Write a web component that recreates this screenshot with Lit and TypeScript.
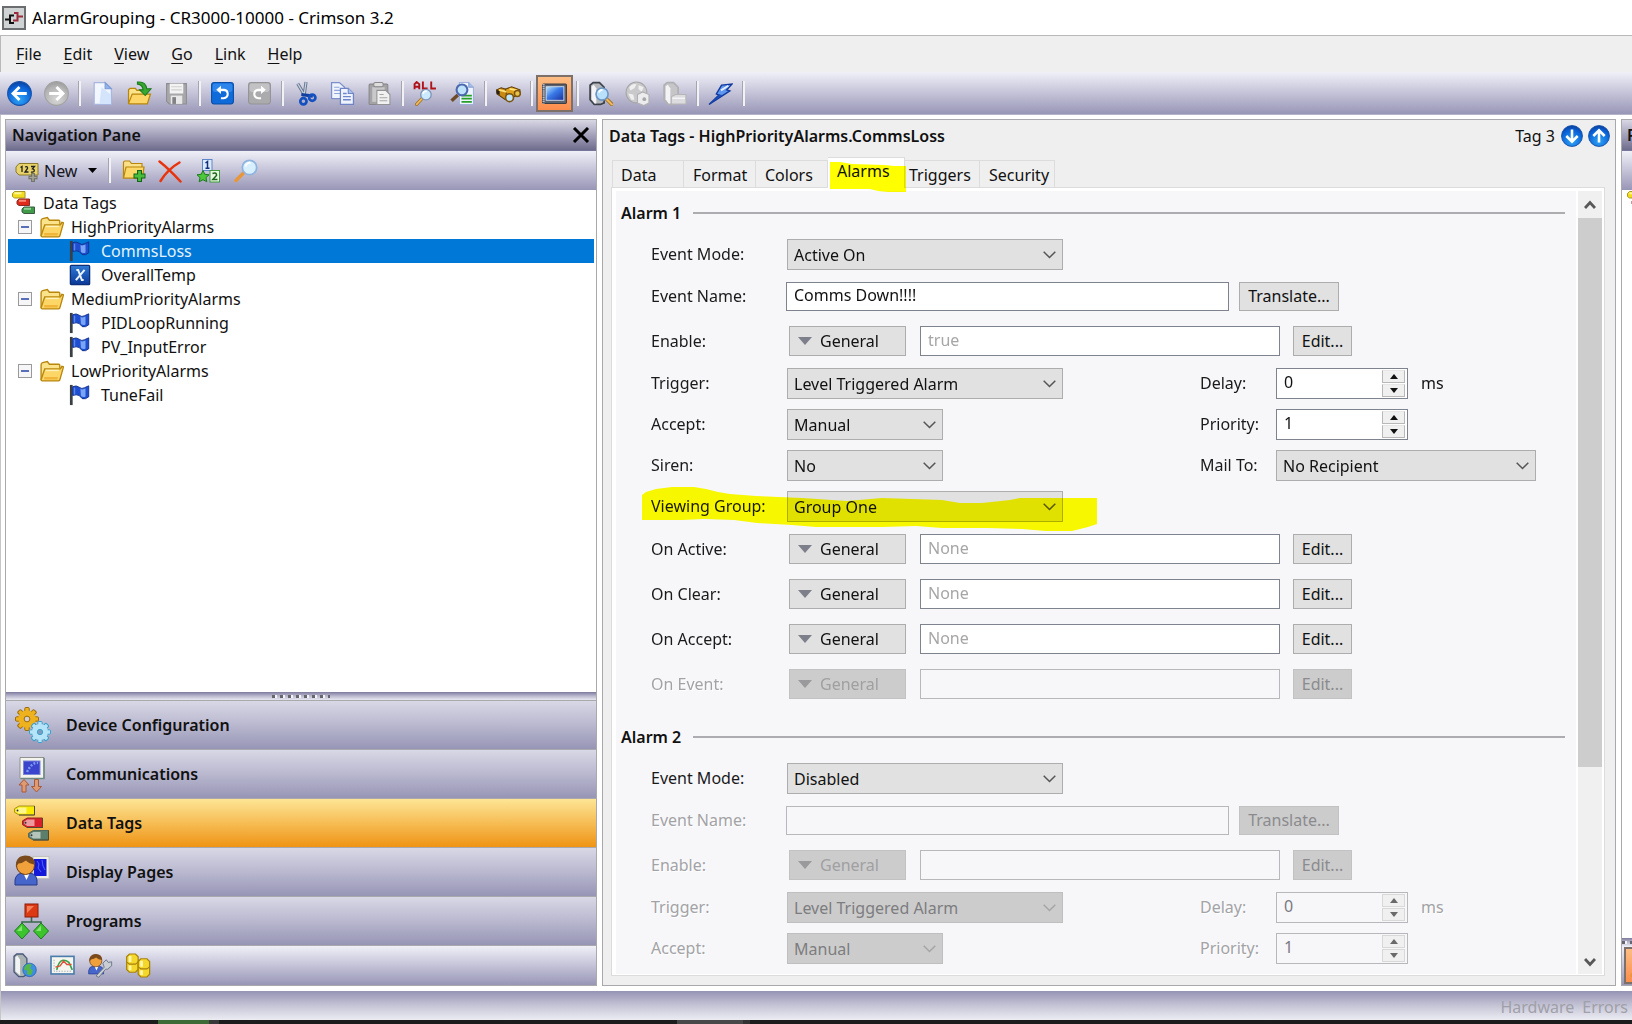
import { LitElement, html, svg, css, nothing, TemplateResult } from "lit";
import { customElement, state } from "lit/decorators.js";
import { classMap } from "lit/directives/class-map.js";

/* ---------- icon drawings ---------- */

const icon = (size: number, body: TemplateResult, box = 24) => html`
  <svg class="icon" width=${size} height=${size} viewBox="0 0 ${box} ${box}" aria-hidden="true">${body}</svg>`;

const arrowDisc = (turn: number, on = true) => svg`
  <defs>
    <radialGradient id=${on ? "discOn" : "discOff"} cx="0.5" cy="0.75" r="0.75">
      <stop offset="0" stop-color=${on ? "#2fa4f5" : "#d6d6d6"}></stop>
      <stop offset="0.7" stop-color=${on ? "#0a62d8" : "#b4b4b4"}></stop>
      <stop offset="1" stop-color=${on ? "#0a3f9c" : "#9a9a9a"}></stop>
    </radialGradient>
  </defs>
  <circle cx="12" cy="12" r="11.4" fill=${on ? "url(#discOn)" : "url(#discOff)"} stroke=${on ? "#1652a8" : "#a2a2a2"} stroke-width="1"></circle>
  <path transform="rotate(${turn} 12 12)" d="M19 12H6.500M12 5.800L5.800 12L12 18.200" fill="none" stroke="#fff" stroke-width="2.800"></path>`;

const magnifier = (x: number, y: number, s: number) => svg`
  <g transform="translate(${x} ${y}) scale(${s})">
    <path d="M9.500 13.500L2 21.500" stroke="#9a6a1c" stroke-width="4.200" stroke-linecap="round"></path>
    <path d="M9.500 13.500L2 21.500" stroke="#f2b95a" stroke-width="2.400" stroke-linecap="round"></path>
    <circle cx="14.500" cy="8.500" r="7" fill="#cdeafc" stroke="#7f95b8" stroke-width="1.800"></circle>
    <path d="M10.500 7.500a4.500 4.500 0 0 1 5-3.600" fill="none" stroke="#fff" stroke-width="2"></path>
  </g>`;

const plcBox = (fill: string, line: string) => svg`
  <path d="M2 4L5 1.500H11L15.500 6V21L12 22.500H6L2 18Z" fill=${fill} stroke=${line} stroke-width="1.600"></path>
  <path d="M3.500 5L5.500 3.500L8 7V21.500H6.500L3.500 17.500Z" fill="#f4f4f6"></path>`;

const tagShape = (x: number, y: number, w: number, h: number, color: string, edge: string) => svg`
  <path transform="translate(${x} ${y})" d="M${h / 2} 0H${w}V${h}H${h / 2}L0 ${h * 0.7}V${h * 0.3}Z" fill=${color} stroke=${edge} stroke-width="1"></path>
  <path transform="translate(${x} ${y})" d="M${h / 2} 1.500H${w * 0.6}V${h - 1.5}H${h / 2}L1.500 ${h * 0.6}V${h * 0.4}Z" fill="#fff" opacity="0.55"></path>
  <path transform="translate(${x} ${y})" d="M${h / 2} ${h}H${w}V0" fill="none" stroke="#4e4a34" stroke-width="1"></path>
  <circle cx=${x + 3} cy=${y + h / 2} r="1" fill="#333"></circle>`;

/* the small tree icon: solid tags without the punched eyelet */
const miniTag = (x: number, y: number, light: string, color: string, edge: string) => svg`
  <path d="M${x + 2} ${y}H${x + 12.5}V${y + 6.5}H${x + 2}L${x} ${y + 5}V${y + 2}Z" fill=${color} stroke=${edge}></path>
  <path d="M${x + 2} ${y + 1.8}H${x + 9}" stroke=${light} stroke-width="2"></path>`;

const gearShape = (cx: number, cy: number, r: number, fill: string, edge: string, hub: string) => svg`
  <g transform="translate(${cx} ${cy})">
    ${[0, 45, 90, 135].map(a => svg`<rect transform="rotate(${a})" x="-2.200" y=${-r} width="4.400" height=${r * 2} rx="1" fill=${fill} stroke=${edge}></rect>`)}
    <circle r=${r * 0.76} fill=${fill}></circle>
    <circle r=${r * 0.25} fill=${hub} stroke=${edge}></circle>
  </g>`;

const personShape = svg`
  <path d="M1 31V26Q2 20 7 19.500H17Q22 20 23 26V31Z" fill="#4666cc" stroke="#26398a"></path>
  <path d="M9.500 19.500L12.500 26L15.500 19.500Z" fill="#fff"></path>
  <circle cx="11.500" cy="11.500" r="9" fill="#f0a13c" stroke="#6b3d10"></circle>
  <path d="M2 13Q1 2.500 11 1.500Q21 1.500 21 10.500Q15 10 12 6.500Q9 9 4.500 9.500Z" fill="#7a4a1c"></path>`;

const folderShape = svg`
  <path d="M2 20V5.500Q2 4 3.500 3.500L8 2.500L10 5H19Q20 5 20 6.500V9" fill="#fbe38c" stroke="#b8860b" stroke-width="1.300"></path>
  <path d="M2 20L5.500 9.500H20.500L22 7L23.500 7.500L20 20Q19.500 21 18.500 21H3Q2 21 2 20Z" fill="#fcd667" stroke="#b8860b" stroke-width="1.300"></path>
  <path d="M5 18.500H18" stroke="#f0b53a" stroke-width="2.400"></path>
  <path d="M6.500 11H19" stroke="#fff2b8" stroke-width="1.400"></path>`;

const ICONS: Record<string, TemplateResult> = {
  back: arrowDisc(0),
  forward: arrowDisc(180, false),
  down: arrowDisc(-90),
  up: arrowDisc(90),
  newFile: svg`
    <path d="M4 1.500H14.500L20.500 7.500V22.500H4Z" fill="#f2f7ff" stroke="#a9b7df" stroke-width="1.200"></path>
    <path d="M11 6L20 13V22H9Z" fill="#d4e4fb"></path>
    <path d="M14.500 1.500L20.500 7.500H14.500Z" fill="#8fb4ee" stroke="#7d9ad2"></path>`,
  open: svg`
    <path d="M1.500 21V8.500L3 7H8L9.500 9H18V12" fill="#fbe38c" stroke="#b8860b" stroke-width="1.200"></path>
    <path d="M1.500 21.500L5 12.500H22.500L19.500 22H2Z" fill="#fdd667" stroke="#b8860b" stroke-width="1.200"></path>
    <path d="M10 1Q18 0 19 7.500H23L17.500 14L12 8.500H15.500Q15 3.500 10 3Z" fill="#39a832" stroke="#1e7a1e" stroke-width="1"></path>`,
  save: svg`
    <path d="M2.500 2.500H21.500V22H5L2.500 19.500Z" fill="#a7a7aa" stroke="#8d8d90"></path>
    <rect x="5.500" y="2.500" width="13" height="9.500" fill="#f3f3f3"></rect>
    <path d="M7 5.500H17M7 8.500H17" stroke="#cfcfcf"></path>
    <rect x="6.500" y="14" width="11" height="8" fill="#e8e8e8"></rect>
    <rect x="8" y="15.500" width="3.500" height="6.500" fill="#828284"></rect>`,
  undo: svg`
    <rect x="1.500" y="1.500" width="21" height="20.500" rx="2.500" fill="#0f6ada" stroke="#0b4ea6"></rect>
    <rect x="2.500" y="2.500" width="19" height="8" rx="2" fill="#3b93f2" opacity="0.7"></rect>
    <path d="M8 8.500H13.500Q17 9 17 12.500Q17 16 13 16.500H10.500" fill="none" stroke="#fff" stroke-width="2"></path>
    <path d="M10.500 4.500V12.500L6 8.500Z" fill="#fff"></path>`,
  redo: svg`
    <rect x="1.500" y="1.500" width="21" height="20.500" rx="2.500" fill="#ababad" stroke="#949496"></rect>
    <rect x="2.500" y="2.500" width="19" height="8" rx="2" fill="#c2c2c4"></rect>
    <path d="M16 8.500H10.500Q7 9 7 12.500Q7 16 11 16.500H13.500" fill="none" stroke="#fff" stroke-width="2"></path>
    <path d="M13.500 4.500V12.500L18 8.500Z" fill="#fff"></path>`,
  cut: svg`
    <path d="M4.500 2.500L12 15M12.500 1L10.500 15" stroke="#66768f" stroke-width="3"></path>
    <path d="M4.500 2.500L12 15M12.500 1L10.500 15" stroke="#c5d0e0" stroke-width="1.200"></path>
    <path d="M8 13L19 14.500" stroke="#123f9e" stroke-width="3"></path>
    <circle cx="10" cy="19.500" r="3" fill="none" stroke="#1550c0" stroke-width="2.600"></circle>
    <circle cx="18.500" cy="16" r="3" fill="none" stroke="#1550c0" stroke-width="2.600"></circle>`,
  copy: svg`
    <path d="M1.500 1.500H9L14 6V17H1.500Z" fill="#eef3fd" stroke="#7b8fca" stroke-width="1.200"></path>
    <path d="M4 6H9M4 9H10M4 12H10" stroke="#8fa4dc"></path>
    <path d="M10 7H17.500L22.500 12V22.500H10Z" fill="#eef3fd" stroke="#6f84c4" stroke-width="1.200"></path>
    <path d="M17.500 7V12H22.500" fill="#a9c1ef" stroke="#6f84c4"></path>
    <path d="M12.500 12H16M12.500 15H20M12.500 18H20" stroke="#6f86cc" stroke-width="1.300"></path>`,
  paste: svg`
    <rect x="2" y="3" width="18" height="19.500" rx="1" fill="#a3a3a5" stroke="#88888a"></rect>
    <rect x="5" y="6" width="12" height="14" fill="#c9c9cb"></rect>
    <rect x="6.500" y="1.500" width="9" height="4" rx="1.500" fill="#dedede" stroke="#88888a"></rect>
    <path d="M9.500 9H18L22 13V22.500H9.500Z" fill="#f1f1f1" stroke="#929294"></path>
    <path d="M12 13H16M12 16H19.500M12 19H19.500" stroke="#a6a6a8"></path>`,
  findAll: svg`
    <g fill="none" stroke="#b01218" stroke-width="1.800">
      <path d="M1.500 8V3L3.500 1L6 3V8M1.500 5.500H6"></path><path d="M9.500 0.500V7.200H14"></path><path d="M17.500 0.500V7.200H22"></path>
    </g>${magnifier(2, 7, 0.72)}`,
  findDoc: svg`
    <path d="M9 1.500H18L22.500 6V22.500H9Z" fill="#eef5ff" stroke="#9fb1da"></path>
    <path d="M18 1.500V6H22.500" fill="#9dbbe8" stroke="#8aa2d2"></path>
    <path d="M11 14H21M11 17H21M11 20H21" stroke="#28a028" stroke-width="1.700"></path>
    <path d="M7.500 13.500L1.500 19" stroke="#6d4b28" stroke-width="3.400"></path>
    <circle cx="11.500" cy="8.500" r="5.200" fill="#bfe2fb" stroke="#4c68ae" stroke-width="2"></circle>`,
  binoculars: svg`
    <path d="M0.500 8.500L5 6.500L13 9L12 17L9 18L1 12.500Z" fill="#c88a12" stroke="#5f3d08"></path>
    <path d="M9 8L15 5.500L23 8.500V13L17 15L10 13Z" fill="#e0a21c" stroke="#5f3d08"></path>
    <path d="M3 8.500L10 10.500M13 7.500L20 9" stroke="#ffe27a" stroke-width="1.800"></path>
    <path d="M0.500 8.500V12L3.500 13.500V9.500Z" fill="#26211a"></path>
    <circle cx="13" cy="16" r="3.800" fill="#bfe6fb" stroke="#7a5410" stroke-width="1.600"></circle>
    <circle cx="20.500" cy="12" r="2.800" fill="#e9c24a" stroke="#7a5410" stroke-width="1.400"></circle>`,
  monitor: svg`
    <defs><linearGradient id="crt" x1="0" y1="0" x2="1" y2="1">
      <stop offset="0" stop-color="#b8e6ff"></stop><stop offset="0.45" stop-color="#3a7be8"></stop><stop offset="1" stop-color="#1a2f9c"></stop>
    </linearGradient></defs>
    <rect x="0.500" y="3" width="23" height="18.500" rx="1" fill="#5c6370" stroke="#3b3f48"></rect>
    <path d="M1.500 3V21.500" stroke="#d9dde6" stroke-width="2" stroke-dasharray="1 1"></path>
    <rect x="4" y="5.500" width="17" height="13" fill="url(#crt)" stroke="#dfe6f2" stroke-width="0.800"></rect>`,
  findPlc: svg`
    ${plcBox("#b4b8bc", "#3c4048")}
    <path d="M17.500 17L23 22.500" stroke="#9a6a1c" stroke-width="3.600" stroke-linecap="round"></path>
    <path d="M17.500 17L23 22.500" stroke="#f2b95a" stroke-width="2" stroke-linecap="round"></path>
    <circle cx="13.500" cy="12.500" r="5.800" fill="#b9e0fa" stroke="#6d95c4" stroke-width="1.600"></circle>
    <path d="M10.500 11a3.500 3.500 0 0 1 3.500-2.500" fill="none" stroke="#fff" stroke-width="1.600"></path>`,
  globeOff: svg`
    <circle cx="11" cy="11" r="10" fill="#c9c9cb" stroke="#a6a6a8"></circle>
    <path d="M4 6Q7 2 11 3L9 7L5 9ZM13 4L18 6L16 10L13 8ZM3 12L8 13L9 18L6 18Z" fill="#efefef"></path>
    <path d="M12 13L17 10.500L23 13V21L18 23.500L12 21Z" fill="#ececee" stroke="#b0b0b2"></path>
    <circle cx="18.500" cy="17.500" r="1.800" fill="#a6a6a8"></circle>`,
  plcOff: svg`
    ${plcBox("#c6c6c8", "#b0b0b2")}
    <path d="M9 15L13 13H23V22H9Z" fill="#dcdcde" stroke="#b6b6b8"></path>
    <path d="M10 16.500H22" stroke="#fff"></path>`,
  bolt: svg`
    <path d="M13 4L23 3L18 8.500L21 9.500L1 22.500L10.500 13.500L8 12.500Z" fill="#5f96f0" stroke="#10389c" stroke-width="1.300"></path>
    <path d="M12.500 9L19.500 4.500" stroke="#e3efff" stroke-width="1.800"></path>
    <path d="M1 22.500L11 13L14 13.500Z" fill="#1a4cb8"></path>`,
  newTag: svg`
    <path d="M4 4.500H23V16H4L1 13V8Z" fill="#e8d36a" stroke="#8a7a2a"></path>
    <path d="M5.500 8.500L7 7.500V13M10 8Q13 7 12.500 9.500L10 13H13.500M16 7.500H19.500L17.500 9.800Q20 10.500 19 12.500Q17.500 13.500 16 12.800" fill="none" stroke="#222" stroke-width="1.300"></path>
    <path d="M18 14V23M13.500 18.500H22.500" stroke="#6a6a5c" stroke-width="3.600"></path>
    <path d="M18 14.800V22.200M14.300 18.500H21.700" stroke="#a5a598" stroke-width="1.600"></path>`,
  newFolder: svg`
    <path d="M1.500 19V3.500Q1.500 2 3 2H7.500L9.500 4.500H20V19Z" fill="#fbe08a" stroke="#b8860b" stroke-width="1.200"></path>
    <path d="M1.500 19L4 8H22L20.500 19Z" fill="#fcd868" stroke="#b8860b" stroke-width="1.200"></path>
    <path d="M17.500 11V23M11.500 17H23.500" stroke="#14661a" stroke-width="5"></path>
    <path d="M17.500 12V22M12.500 17H22.500" stroke="#4bbd3c" stroke-width="2.800"></path>`,
  remove: svg`<path d="M1.500 2.500Q11 10 22.500 22.500M21.500 3.500Q10 10 2.500 22" fill="none" stroke="#e8330c" stroke-width="2.400" stroke-linecap="round"></path>`,
  sort: svg`
    <rect x="6.500" y="0.500" width="9.500" height="11" fill="#dce9fb" stroke="#5f86c8"></rect>
    <path d="M9.500 4L11.500 2.500V9M9.500 9.200H13.500" fill="none" stroke="#12307c" stroke-width="1.500"></path>
    <rect x="14" y="11.500" width="9.500" height="11.500" fill="#e8f7e0" stroke="#3c9a3c"></rect>
    <path d="M16.500 14.500Q21 13 20.500 16.500L16.800 20.500H21.500" fill="none" stroke="#1b6420" stroke-width="1.500"></path>
    <path d="M7 11.500L8.800 15.300L13 15.800L10 18.600L10.800 22.800L7 20.700L3.200 22.800L4 18.600L1 15.800L5.200 15.300Z" fill="#4cc83a" stroke="#1f7a1f"></path>`,
  search: svg`
    <path d="M10 13.500L2 21.500" stroke="#e8963c" stroke-width="3.600" stroke-linecap="round"></path>
    <circle cx="15.500" cy="8.500" r="7.200" fill="#d8f0fe" stroke="#8fb4e0" stroke-width="1.800"></circle>
    <path d="M11.500 7.500a4.500 4.500 0 0 1 5-3.600" fill="none" stroke="#fff" stroke-width="2"></path>`,
  tags: svg`
    ${miniTag(0.5, 0.5, "#fff89a", "#f2dc1c", "#a8942a")}
    ${miniTag(5, 8, "#f88a78", "#e02a1a", "#8c2c24")}
    ${miniTag(10, 16, "#8ed096", "#3f9a4a", "#3b5a40")}`,
  folder: folderShape,
  flag: svg`
    <path d="M2.500 1V23" stroke="#3a3f44" stroke-width="3"></path>
    <path d="M4 3Q8 1 11 3.500Q14 6 17 4L21.500 2V14Q18 17 14.500 16L11 12.500Q8 11 4 12.500Z" fill="#1f4fd0" stroke="#12308c" stroke-width="1"></path>
    <path d="M12.500 5.500Q15 6.500 18 5V13.500Q15.500 15 13 13Z" fill="#7aa5f6"></path>
    <path d="M6 4V11.500" stroke="#5a86ee" stroke-width="1.600"></path>`,
  formula: svg`
    <defs><linearGradient id="fx" x1="0" y1="0" x2="0" y2="1"><stop offset="0" stop-color="#2e7ad6"></stop><stop offset="1" stop-color="#0a3796"></stop></linearGradient></defs>
    <rect x="1.500" y="1.500" width="21" height="21" rx="1" fill="url(#fx)" stroke="#0b2f78" stroke-width="1.400"></rect>
    <path d="M8 6.500L10 6.500L14 17.500H16M17 6.500L7.500 17.500" fill="none" stroke="#e8f3ff" stroke-width="2.200"></path>`,
};

const NAV_ICONS: Record<string, TemplateResult> = {
  devices: svg`
    ${gearShape(13, 12, 11.5, "#eeb21e", "#9a6a0a", "#d5cfd8")}
    ${gearShape(26, 25, 10.5, "#b5e4f8", "#3aa0cc", "#7f9cc0")}`,
  comms: svg`
    <path d="M6 1.500H30V22.500H6Z" fill="#f4f3ee" stroke="#8f938f"></path>
    <path d="M30 2V22.500H7" fill="none" stroke="#6f8a84" stroke-width="1.600"></path>
    <rect x="9.500" y="5" width="16.500" height="13.500" fill="#3a44cc" stroke="#7a86d8"></rect>
    <path d="M13 16Q18 6 24 7" fill="none" stroke="#7c9af0" stroke-width="2.400" stroke-dasharray="2 1.500"></path>
    <path d="M10 23.500L15 29H12V36H8V29H5ZM22.500 36L27.500 30.500H24.500V23.500H20.500V30.500H17.500Z" fill="#e09a72" stroke="#a65a3a"></path>`,
  tags: svg`
    ${tagShape(0.5, 1, 20, 9, "#f8ea00", "#a8942a")}
    ${tagShape(8.5, 13, 20, 9.500, "#d8202c", "#8c2c24")}
    ${tagShape(14.5, 25.5, 20, 9.500, "#5b7f6a", "#55665c")}`,
  pages: svg`
    <rect x="19" y="2.500" width="16" height="22" fill="#efefea" stroke="#c2c2c0"></rect>
    <rect x="20" y="5" width="12.500" height="17" fill="#1418d8"></rect>
    <path d="M23 7L25 10L24 14L27 18M28 6L29 12L31 16" stroke="#4c66ff" fill="none"></path>
    ${personShape}`,
  programs: svg`
    <path d="M17.500 14V19M8 25V19H27V25" fill="none" stroke="#3a6a4a" stroke-width="1.600"></path>
    <rect x="11" y="1" width="13" height="13" fill="#dc3a12" stroke="#8c1c0c"></rect>
    <path d="M13 3H20L13 10Z" fill="#f2805a"></path>
    <path d="M8 20L15.500 28L8 36L0.500 28ZM27 20L34.500 28L27 36L19.500 28Z" fill="#3cc42c" stroke="#1c7a1c"></path>
    <path d="M8 22.500L3 28H8ZM27 22.500L22 28H27Z" fill="#86e272"></path>`,
  web: svg`
    <path d="M3 5L7 1.500H16L22 8V32L17 35H10L3 28Z" fill="#aab2b4" stroke="#4a5a78" stroke-width="2"></path>
    <path d="M5 6L8 4L12 10V33L5 27Z" fill="#f2f4f4"></path>
    <circle cx="26" cy="25" r="10" fill="#3f8ee0" stroke="#1c5aa8"></circle>
    <path d="M19 20Q23 15 29 17L27 23L31 26L28 33L22 31L23 26L18 25Z" fill="#54b848"></path>`,
  trend: svg`
    <rect x="1.500" y="5" width="34" height="26" fill="#f5f6f0" stroke="#4a7cac" stroke-width="2.400"></rect>
    <path d="M6 10V27H32" fill="none" stroke="#7a8a9c" stroke-dasharray="2 2"></path>
    <path d="M10 25Q13 12 18 11T28 14L33 25" fill="none" stroke="#38a04a" stroke-width="2.400"></path>
    <path d="M8 21L15 19L20 12L25 17L32 17" fill="none" stroke="#e05038" stroke-width="2"></path>`,
  security: svg`
    ${personShape}
    <path d="M12 34L24 21L22 15L27 10L30 14L35 13L35 19L29 24L26 24L16 36Z" fill="#c9ced4" stroke="#6c7684" stroke-width="1.400"></path>`,
  database: svg`
    ${[[1, 1.5], [18, 8.5]].map(([x, y]) => svg`<g transform="translate(${x} ${y})">
      <path d="M0 4L4 0H13L17 4V23L13 27H4L0 23Z" fill="#f4d82c" stroke="#a8800c" stroke-width="1.800"></path>
      <path d="M0 12L4 15H13L17 12" fill="none" stroke="#a8800c" stroke-width="1.600"></path>
      <path d="M5 3V12M5 17V24" stroke="#fff6ae" stroke-width="4"></path></g>`)}`,
};

const chevron = html`<svg class="chevron" width="13" height="8" viewBox="0 0 13 8" aria-hidden="true"><path d="M0.700 0.800L6.500 6.500L12.300 0.800" fill="none" stroke="currentColor" stroke-width="1.500"></path></svg>`;
const triangle = html`<svg width="14" height="8" viewBox="0 0 14 8" aria-hidden="true"><path d="M0 0H14L7 8Z" fill="currentColor"></path></svg>`;

/* ---------- data ---------- */

const TOOL_GROUPS: [string, string][][] = [
  [["back", "Back"], ["forward", "Forward"]],
  [["newFile", "New"], ["open", "Open"], ["save", "Save"]],
  [["undo", "Undo"], ["redo", "Redo"]],
  [["cut", "Cut"], ["copy", "Copy"], ["paste", "Paste"]],
  [["findAll", "Find all"], ["findDoc", "Find in item"]],
  [["binoculars", "Find"]],
  [["monitor", "Preview"]],
  [["findPlc", "Find device"], ["globeOff", "Browse"], ["plcOff", "Mount"]],
  [["bolt", "Download"]],
];

const TREE = [
  { name: "HighPriorityAlarms", items: [["CommsLoss", "flag"], ["OverallTemp", "formula"]] },
  { name: "MediumPriorityAlarms", items: [["PIDLoopRunning", "flag"], ["PV_InputError", "flag"]] },
  { name: "LowPriorityAlarms", items: [["TuneFail", "flag"]] },
];

const CATEGORIES = [
  ["Device Configuration", "devices"],
  ["Communications", "comms"],
  ["Data Tags", "tags"],
  ["Display Pages", "pages"],
  ["Programs", "programs"],
];

const TABS = ["Data", "Format", "Colors", "Alarms", "Triggers", "Security"];

interface Alarm { id: string; title: string; mode: string; name: string; off: boolean; }
const ALARMS: Alarm[] = [
  { id: "a1", title: "Alarm 1", mode: "Active On", name: "Comms Down!!!!", off: false },
  { id: "a2", title: "Alarm 2", mode: "Disabled", name: "", off: true },
];

@customElement("app-root")
export class AppRoot extends LitElement {
  @state() private selected = "CommsLoss";
  @state() private tab = "Alarms";
  @state() private category = "Data Tags";

  static styles = css`
    :host {
      display: grid;
      grid-template-rows: 35px 37px 43px minmax(0, 1fr) 29px 4px;
      height: 100vh;
      box-sizing: border-box;
      overflow: hidden;
      background: #fff;
      color: #111;
      font: 16px/24px "Noto Sans", "Open Sans", sans-serif;
      --edge: #a9a9ad;
      --bar: linear-gradient(#f0f0f8, #c4c3d8 50%, #9896b6);
      --nav: linear-gradient(#d9d8e6, #b9b8cf 50%, #9795b5);
      --head: linear-gradient(#d8d7e4, #a3a1ba 50%, #6e6c8c);
    }
    *, *::before, *::after { box-sizing: border-box; }
    button, input, select { font: inherit; color: inherit; margin: 0; border-radius: 0; }
    button { padding: 0; border: 0; background: none; }
    h1, h2, ul { margin: 0; padding: 0; font: inherit; list-style: none; }
    .icon, svg { display: block; flex: none; }

    .title { display: flex; align-items: center; gap: 6px; padding-left: 2px; font-size: 17px; color: #000; }
    .menu { display: flex; align-items: center; gap: 22px; padding: 0 15px; background: #efefef; border-top: 1px solid #b9b9b9; border-left: 1px solid #b9b9b9; }
    .menu u { text-underline-offset: 3px; }
    .tools { display: flex; align-items: center; padding-left: 1px; background: var(--bar); border-bottom: 1px solid #b4b3c8; }
    .tool { display: grid; place-items: center; width: 37px; height: 37px; }
    .tool.on { background: linear-gradient(#fdbd84, #fc8d4c); border: 2px solid #7d7068; }
    .sep { width: 9px; display: flex; justify-content: center; }
    .sep::before { content: ""; width: 3px; height: 25px; background: #f2f2f6; border-left: 1px solid #a5a5b0; }

    .work { display: flex; gap: 5px; min-height: 0; padding: 4px 0 5px 4px; border-left: 1px solid #c6c6c6; }
    .panel { display: flex; flex-direction: column; min-height: 0; border: 1px solid var(--edge); background: #fff; }
    .nav { flex: 0 0 592px; }
    .main { flex: 1; min-width: 0; background: #efefef; }
    .side { flex: 0 0 11px; overflow: hidden; border-right: 0; }

    .head { flex: none; display: flex; align-items: center; justify-content: space-between; height: 31px; padding: 0 6px; background: var(--head); border-bottom: 1px solid #77759a; }
    .bold { font-weight: 600; }
    .subbar { flex: none; display: flex; align-items: center; height: 39px; background: var(--bar); padding-left: 6px; }
    .new { display: flex; align-items: center; gap: 5px; width: 89px; padding-left: 3px; color: #16161c; }
    .new svg:last-child { margin-left: 6px; }
    .subbar .sep { margin: 0 2px 0 4px; }
    .subbar .tool { width: 38px; }
    .subbar .tool:first-of-type { width: 37px; }
    .subbar .sep + .tool { width: 35px; }

    .tree { flex: 1; min-height: 0; overflow: hidden; padding: 1px 2px; }
    .node { display: flex; align-items: center; height: 24px; width: 100%; text-align: left; gap: 7px; }
    .node.root { padding-left: 4px; }
    .node.group { padding-left: 10px; }
    .node.leaf { padding-left: 61px; gap: 10px; }
    .node.picked { background: #0078d7; color: #e6f2fc; }
    .box { display: grid; place-items: center; width: 14px; height: 14px; border: 1px solid #9a9a9a; background: #f6f6f8; }
    .box::before { content: ""; width: 8px; height: 2px; background: #5870b8; }
    .grip { flex: none; height: 8px; display: grid; place-items: center; background: linear-gradient(#7c7a9c, #b9b8ce 50%, #e8e8f0); }
    .grip::before { content: ""; width: 58px; height: 3px; background: repeating-linear-gradient(90deg, #66666f 0 3px, #f4f4f8 3px 5px, transparent 5px 8px); }
    .cats { flex: none; border-top: 1px solid var(--edge); }
    .cat { display: flex; align-items: center; gap: 15px; width: 100%; height: 49px; padding-left: 8px; background: var(--nav); border-bottom: 1px solid var(--edge); }
    .cat.on { background: linear-gradient(#fde595, #f6bd55 50%, #ef9414); }
    .strip { flex: none; display: flex; align-items: center; gap: 13px; height: 39px; padding-left: 6px; background: var(--bar); }

    .mainhead { flex: none; display: flex; align-items: center; gap: 5px; height: 37px; padding: 0 5px 6px 6px; }
    .mainhead h1 { flex: 1; }
    .count { margin-right: 1px; }
    .tabs { display: flex; align-items: flex-end; height: 31px; padding-left: 9px; position: relative; }
    .tab { height: 28px; border: 1px solid #dcdcdc; border-bottom: 0; border-left-width: 0; text-align: left; padding-left: 9px; width: 72px; white-space: nowrap; }
    .tab:first-child { border-left-width: 1px; padding-left: 8px; }
    .tab:last-of-type { width: 75px; }
    .tab.on { height: 31px; width: 77px; background: #fff; padding: 0 0 4px 9px; }
    .tab.on + .tab { width: 75px; padding-left: 4px; }
    .mark { position: absolute; mix-blend-mode: multiply; pointer-events: none; }
    .tabs .mark { left: 227px; top: 5px; }
    .page { flex: 1; min-height: 0; display: flex; margin: -1px 10px 9px 8px; border: 1px solid #dcdcdc; background: #fff; padding: 3px 2px 1px 4px; }
    .scroll { flex: 1; min-width: 0; overflow: hidden auto; scrollbar-width: none; background: #f7f7fa; padding-top: 1px; }
    .bar { flex: 0 0 24px; display: flex; flex-direction: column; background: #f0f0f0; margin-left: 2px; }
    .bar button { height: 27px; display: grid; place-items: center; color: #585858; }
    .bar button:last-child { height: 24px; }
    .track { flex: 1; }
    .thumb { height: 75%; background: #cdcdcd; }

    .alarm { padding: 0 11px 10px 5px; }
    .caption { display: flex; align-items: center; gap: 12px; height: 42px; }
    .caption::after { content: ""; flex: 1; height: 2px; background: #adadb1; }
    .rows { padding: 0 0 0 30px; }
    .settings { display: grid; gap: 1px; }
    .row { display: grid; grid-template-columns: 136px 413px 76px minmax(0, 1fr); align-items: center; height: 40px; position: relative; }
    .row.text { height: 44px; grid-template-columns: 135px minmax(0, 1fr); }
    .row.expr { height: 45px; grid-template-columns: 138px minmax(0, 1fr); }
    .row .mark { left: -9px; top: 1px; }
    .fields { display: flex; align-items: center; }
    label { color: #1a1a1a; white-space: nowrap; }
    label.off, .unit.off { color: #a3a3a6; text-shadow: 1px 1px #fff; }
    .combo { position: relative; display: flex; align-items: center; width: 276px; height: 31px; margin-top: 1px; color: #111; }
    .combo.short { width: 156px; }
    .combo.wide { width: 260px; }
    .combo select { width: 100%; height: 100%; padding: 0 24px 0 6px; border: 1px solid #adadad; background: #e1e1e1; appearance: none; opacity: 1; }
    .chevron { position: absolute; right: 7px; color: #555; pointer-events: none; }
    .combo select:disabled { background: #cccccc; border-color: #bfbfbf; color: #7d7d80; }
    .combo select:disabled + .chevron { color: #a5a5a5; }
    .entry { height: 29px; border: 1px solid #7f838e; background: #fff; padding: 0 7px 2px; width: 443px; }
    .row.expr .entry { height: 30px; width: 360px; margin-left: 14px; }
    .entry::placeholder { color: #a6a6a8; opacity: 1; }
    .entry:disabled { background: #f7f7fa; border-color: #b8b8bc; }
    .push { height: 30px; border: 1px solid #adadad; background: #e1e1e1; text-align: center; color: #111; }
    .push:disabled { background: #cccccc; border-color: #c2c2c2; color: #8b8b8e; }
    .translate { width: 100px; height: 29px; margin-left: 10px; }
    .edit { width: 59px; margin-left: 13px; }
    .general { width: 117px; display: flex; align-items: center; gap: 8px; padding-left: 8px; }
    .general svg { color: #7d808a; }
    .general:disabled { color: #a0a0a2; }
    .general:disabled svg { color: #9a9a9c; }
    .spin { display: flex; width: 132px; height: 31px; border: 1px solid #7f838e; background: #fff; padding: 1px 2px 1px 0; }
    .spin input { flex: 1; min-width: 0; border: 0; background: none; padding: 0 0 3px 7px; appearance: textfield; }
    .spin input::-webkit-inner-spin-button { appearance: none; margin: 0; }
    .spin.off { border-color: #b8b8bc; background: #f7f7fa; color: #6e6e72; }
    .spin.off input { color: #7a7a80; }
    .steps { display: flex; flex-direction: column; gap: 1px; width: 23px; }
    .steps button { flex: 1; display: grid; place-items: center; background: #f0f0f0; border: 1px solid #b8b8b8; border-top-color: #e6e6e6; color: #111; }
    .spin.off .steps button { border-color: #d8d8d8; color: #6a6a6a; }
    .unit { margin-left: 13px; }

    .side .head { padding: 0 5px; }
    .side .blank { flex: 1; padding: 1px 0 0 5px; }
    .side .strip { padding: 0 0 0 2px; }
    .side .tool { flex: none; }
    .status { display: flex; align-items: center; justify-content: flex-end; gap: 8px; padding: 2px 4px 0; background: linear-gradient(#9593b3, #c5c4d6 50%, #ececf3); color: #a0a0a8; border-left: 1px solid #c6c6c6; }
    .taskbar { background: linear-gradient(90deg, #1c1c1c 158px, #3c6b38 158px 209px, #383838 209px 219px, #1c1c1c 219px 677px, #484848 677px 743px, #333 743px 750px, #1c1c1c 750px); }
  `;

  private combo(id: string, value: string, cls = "", off = false) {
    return html`<div class="combo ${cls}">
      <select id=${id} ?disabled=${off}><option selected>${value}</option></select>${chevron}
    </div>`;
  }

  private label(id: string, text: string, off = false) {
    return html`<label class=${classMap({ off })} for=${id}>${text}</label>`;
  }

  private expression(id: string, text: string, hint: string, off: boolean) {
    return html`<div class="row expr">
      ${this.label(id, text, off)}
      <div class="fields">
        <button class="push general" ?disabled=${off}>${triangle}General</button>
        <input class="entry" id=${id} placeholder=${off ? "" : hint} ?disabled=${off}>
        <button class="push edit" ?disabled=${off}>Edit...</button>
      </div>
    </div>`;
  }

  private spinner(id: string, value: number, off: boolean, unit = "") {
    const arrow = (d: string) => html`<svg width="8" height="5" viewBox="0 0 8 5"><path d=${d} fill="currentColor"></path></svg>`;
    return html`<div class="fields">
      <div class=${classMap({ spin: true, off })}>
        <input id=${id} type="number" .value=${String(value)} ?disabled=${off}>
        <div class="steps">
          <button aria-label="Increase" ?disabled=${off}>${arrow("M0 5H8L4 0Z")}</button>
          <button aria-label="Decrease" ?disabled=${off}>${arrow("M0 0H8L4 5Z")}</button>
        </div>
      </div>
      ${unit ? html`<span class=${classMap({ unit: true, off })}>${unit}</span>` : nothing}
    </div>`;
  }

  private alarm(a: Alarm) {
    const id = (s: string) => `${a.id}-${s}`;
    const off = a.off;
    return html`<section class="alarm">
      <h2 class="caption bold">${a.title}</h2>
      <div class="rows">
        <div class="row">${this.label(id("mode"), "Event Mode:")}${this.combo(id("mode"), a.mode)}</div>
        <div class="row text">
          ${this.label(id("name"), "Event Name:", off)}
          <div class="fields">
            <input class="entry" id=${id("name")} .value=${a.name} ?disabled=${off}>
            <button class="push translate" ?disabled=${off}>Translate...</button>
          </div>
        </div>
        ${this.expression(id("enable"), "Enable:", "true", off)}
        <div class="settings">
          <div class="row">
            ${this.label(id("trigger"), "Trigger:", off)}${this.combo(id("trigger"), "Level Triggered Alarm", "", off)}
            ${this.label(id("delay"), "Delay:", off)}${this.spinner(id("delay"), 0, off, "ms")}
          </div>
          <div class="row">
            ${this.label(id("accept"), "Accept:", off)}${this.combo(id("accept"), "Manual", "short", off)}
            ${this.label(id("priority"), "Priority:", off)}${this.spinner(id("priority"), 1, off)}
          </div>
          <div class="row">
            ${this.label(id("siren"), "Siren:", off)}${this.combo(id("siren"), "No", "short", off)}
            ${this.label(id("mail"), "Mail To:", off)}${this.combo(id("mail"), "No Recipient", "wide", off)}
          </div>
          <div class="row">
            ${this.label(id("group"), "Viewing Group:", off)}${this.combo(id("group"), "Group One", "", off)}
            ${off ? nothing : html`<svg class="mark" width="455" height="46" viewBox="0 0 455 46" aria-hidden="true">
              <path fill="#ff0" d="M0 8L4 5L14 2L30 0H52L64 2L76 5L88 7L114 9L160 11L205 14L240 11L300 13L318 16H340L368 13L378 11H455V37L446 40L430 44H404L380 42L345 41H300L274 39L240 40H174L150 38L115 36L92 33L62 32L40 33H0Z"></path></svg>`}
          </div>
        </div>
        ${this.expression(id("active"), "On Active:", "None", off)}
        ${this.expression(id("clear"), "On Clear:", "None", off)}
        ${this.expression(id("onaccept"), "On Accept:", "None", off)}
        ${this.expression(id("event"), "On Event:", "", true)}
      </div>
    </section>`;
  }

  private navigation() {
    return html`<aside class="panel nav">
      <div class="head">
        <h2 class="bold">Navigation Pane</h2>
        <button aria-label="Close"><svg width="18" height="16" viewBox="0 0 18 16"><path d="M2 1L16 15M16 1L2 15" stroke="#000" stroke-width="3"></path></svg></button>
      </div>
      <div class="subbar">
        <button class="new">${icon(24, ICONS.newTag)}<span>New</span>
          <svg width="9" height="5" viewBox="0 0 9 5"><path d="M0 0H9L4.500 5Z"></path></svg></button>
        <i class="sep"></i>
        ${[["newFolder", "New folder"], ["remove", "Delete"], ["sort", "Sort"], ["search", "Find"]].map(([k, t]) =>
          html`<button class="tool" aria-label=${t}>${icon(24, ICONS[k])}</button>`)}
      </div>
      <ul class="tree">
        <li><button class="node root">${icon(24, ICONS.tags)}<span>Data Tags</span></button></li>
        ${TREE.map(g => html`
          <li><button class="node group"><i class="box"></i>${icon(25, ICONS.folder)}<span>${g.name}</span></button>
            <ul>${g.items.map(([name, kind]) => html`<li>
              <button class=${classMap({ node: true, leaf: true, picked: this.selected === name })}
                @click=${() => (this.selected = name)}>${icon(22, ICONS[kind])}<span>${name}</span></button></li>`)}
            </ul></li>`)}
      </ul>
      <div class="grip"></div>
      <nav class="cats">
        ${CATEGORIES.map(([name, kind]) => html`
          <button class=${classMap({ cat: true, bold: true, on: this.category === name })}
            @click=${() => (this.category = name)}>${icon(37, NAV_ICONS[kind], 37)}<span>${name}</span></button>`)}
      </nav>
      <div class="strip">
        ${[["web", "Web server"], ["trend", "Data logger"], ["security", "Security"], ["database", "Database"]].map(([k, t]) =>
          html`<button aria-label=${t}>${icon(25, NAV_ICONS[k], 37)}</button>`)}
      </div>
    </aside>`;
  }

  private editor() {
    return html`<main class="panel main">
      <header class="mainhead">
        <h1 class="bold">Data Tags - HighPriorityAlarms.CommsLoss</h1>
        <span class="count">Tag 3</span>
        <button aria-label="Next tag">${icon(22, ICONS.down)}</button>
        <button aria-label="Previous tag">${icon(22, ICONS.up)}</button>
      </header>
      <div class="tabs">
        ${TABS.map(t => html`<button class=${classMap({ tab: true, on: this.tab === t })} @click=${() => (this.tab = t)}>${t}</button>`)}
        <svg class="mark" width="76" height="30" viewBox="0 0 76 30" aria-hidden="true">
          <path fill="#ff0" d="M0 0H10L22 2L54 3L64 4H76V30H58L48 29L40 27H0Z"></path></svg>
      </div>
      <div class="page">
        <div class="scroll">${ALARMS.map(a => this.alarm(a))}</div>
        <div class="bar">
          <button aria-label="Scroll up"><svg width="12" height="9" viewBox="0 0 12 9"><path d="M1 8L6 2.500L11 8" fill="none" stroke="currentColor" stroke-width="2.800"></path></svg></button>
          <div class="track"><div class="thumb"></div></div>
          <button aria-label="Scroll down"><svg width="12" height="9" viewBox="0 0 12 9"><path d="M1 1L6 6.500L11 1" fill="none" stroke="currentColor" stroke-width="2.800"></path></svg></button>
        </div>
      </div>
    </main>`;
  }

  render() {
    return html`
      <header class="title">
        <svg width="24" height="24" viewBox="0 0 24 24" aria-hidden="true">
          <rect x="1" y="1" width="22" height="22" fill="#cfd3d3" stroke="#6a6e70" stroke-width="2"></rect>
          <path d="M3 13.500H8M12 9.500H8V17H12" fill="none" stroke="#111" stroke-width="2"></path>
          <path d="M12 7H15.500V14.500H11M15.500 10.500H21" fill="none" stroke="#9a2c3c" stroke-width="2"></path>
        </svg>
        <span>AlarmGrouping - CR3000-10000 - Crimson 3.2</span>
      </header>
      <nav class="menu">
        ${["File", "Edit", "View", "Go", "Link", "Help"].map(m => html`<button><u>${m[0]}</u>${m.slice(1)}</button>`)}
      </nav>
      <div class="tools">
        ${TOOL_GROUPS.map(g => html`${g.map(([k, t]) => html`
          <button class=${classMap({ tool: true, on: k === "monitor" })} aria-label=${t}>${icon(25, ICONS[k])}</button>`)}<i class="sep"></i>`)}
      </div>
      <div class="work">
        ${this.navigation()}
        ${this.editor()}
        <aside class="panel side">
          <div class="head"><span class="bold">P</span></div>
          <div class="subbar"></div>
          <div class="blank">${icon(24, ICONS.tags)}</div>
          <div class="grip"></div>
          <div class="strip"><button class="tool on" aria-label="Resources">${icon(25, ICONS.search)}</button></div>
        </aside>
      </div>
      <footer class="status"><span>Hardware</span><span>Errors</span></footer>
      <div class="taskbar"></div>`;
  }
}
